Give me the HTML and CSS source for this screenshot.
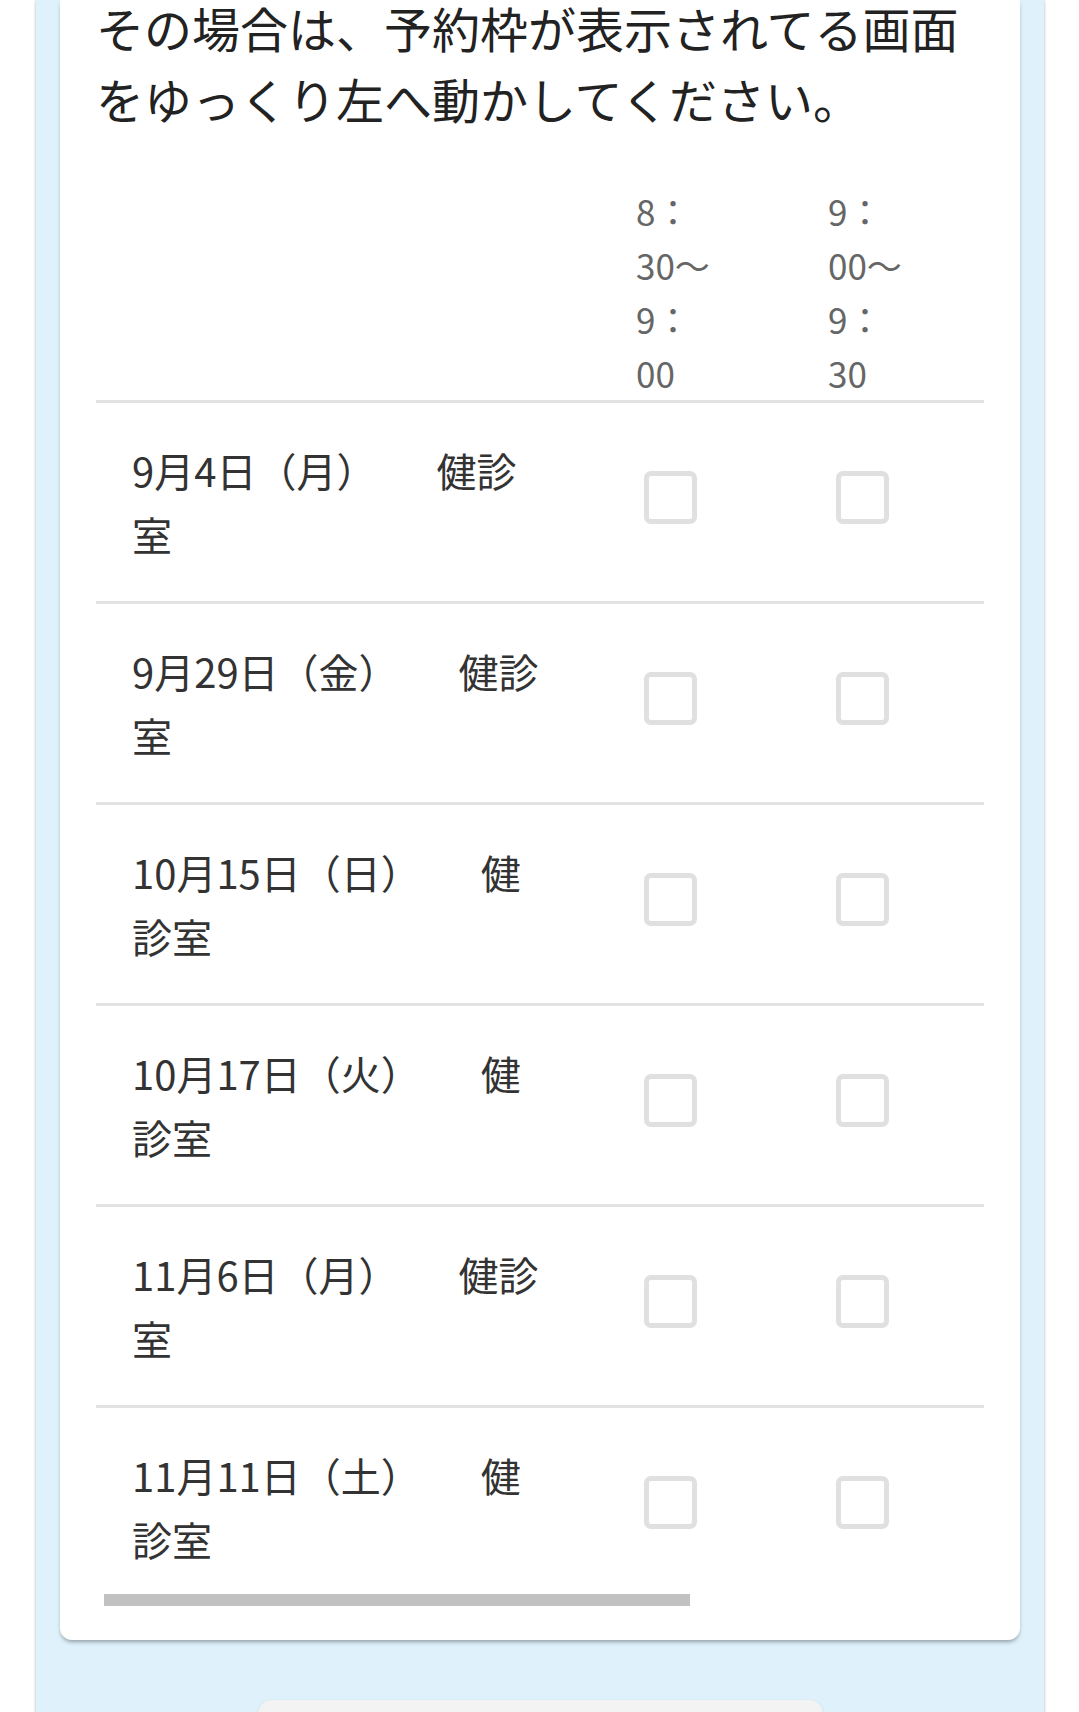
FILE: index.html
```html
<!DOCTYPE html>
<html lang="ja">

<head>
  <meta charset="UTF-8">
  <meta name="viewport" content="width=device-width, initial-scale=1.0">
  <title>予約枠の選択</title>
  <link rel="stylesheet" href="styles.css">
</head>

<body>
  <div class="panel">
    <div class="card">
      <p class="notice">その場合は、予約枠が表示されてる画面をゆっくり左へ動かしてください。</p>

      <div class="table-wrap">
        <table class="slots">
          <thead>
            <tr>
              <th class="col-date"></th>
              <th class="col-time">8：<wbr>30〜<wbr>9：<wbr>00</th>
              <th class="col-time">9：<wbr>00〜<wbr>9：<wbr>30</th>
              <th class="col-time">9：<wbr>30〜<wbr>10：<wbr>00</th>
              <th class="col-time col-last">10：<wbr>00〜<wbr>10：<wbr>30</th>
            </tr>
          </thead>
          <tbody>
            <tr>
              <td class="date">9月4日（月）　　健診室</td>
              <td class="check"><input type="checkbox"></td>
              <td class="check"><input type="checkbox"></td>
              <td class="check"><input type="checkbox"></td>
              <td class="check"><input type="checkbox"></td>
            </tr>
            <tr>
              <td class="date">9月29日（金）　　健診室</td>
              <td class="check"><input type="checkbox"></td>
              <td class="check"><input type="checkbox"></td>
              <td class="check"><input type="checkbox"></td>
              <td class="check"><input type="checkbox"></td>
            </tr>
            <tr>
              <td class="date">10月15日（日）　　健診室</td>
              <td class="check"><input type="checkbox"></td>
              <td class="check"><input type="checkbox"></td>
              <td class="check"><input type="checkbox"></td>
              <td class="check"><input type="checkbox"></td>
            </tr>
            <tr>
              <td class="date">10月17日（火）　　健診室</td>
              <td class="check"><input type="checkbox"></td>
              <td class="check"><input type="checkbox"></td>
              <td class="check"><input type="checkbox"></td>
              <td class="check"><input type="checkbox"></td>
            </tr>
            <tr>
              <td class="date">11月6日（月）　　健診室</td>
              <td class="check"><input type="checkbox"></td>
              <td class="check"><input type="checkbox"></td>
              <td class="check"><input type="checkbox"></td>
              <td class="check"><input type="checkbox"></td>
            </tr>
            <tr>
              <td class="date">11月11日（土）　　健診室</td>
              <td class="check"><input type="checkbox"></td>
              <td class="check"><input type="checkbox"></td>
              <td class="check"><input type="checkbox"></td>
              <td class="check"><input type="checkbox"></td>
            </tr>
          </tbody>
        </table>
      </div>
      <!-- scroll indicator (native scrollbar is hidden) -->
      <div class="scroll-track"><div class="scroll-thumb"></div></div>
    </div>

    <button class="btn-next">確認</button>
  </div>
</body>

</html>
```

FILE: styles.css
```css
* {
  box-sizing: border-box;
  margin: 0;
  padding: 0;
  font-family: "Noto Sans CJK JP", sans-serif;
}

body {
  background-color: #fff;
  overflow: hidden;
}

.panel {
  margin: 0 35px 0 36px;
  padding: 0 24px 40px;
  background-color: #dff2fc;
  box-shadow: 0 0 3px rgba(0, 0, 0, 0.3);
}

.card {
  display: flow-root;
  background-color: white;
  padding: 0 36px 34px;
  border-radius: 0 0 12px 12px;
  box-shadow: 0 3px 4px -1px rgba(0, 0, 0, 0.35);
}

.notice {
  margin: -8px 0 16px;
  font-size: 48px;
  line-height: 71px;
  color: #222;
}

.table-wrap {
  overflow-x: auto;
  scrollbar-width: none;
}

.table-wrap::-webkit-scrollbar {
  display: none;
}

.slots {
  width: 1321px;
  table-layout: fixed;
  border-collapse: collapse;
}

.slots th {
  padding: 34px 54px 0 58px;
  font-size: 35px;
  line-height: 54px;
  font-weight: normal;
  color: #666;
  text-align: left;
  vertical-align: bottom;
  border-bottom: 3px solid #e3e3e3;
}

.slots th.col-date {
  width: 482px;
}

.slots th.col-time {
  width: 192px;
}

.slots th.col-last {
  width: 263px;
}

.slots td {
  border-bottom: 3px solid #e3e3e3;
  vertical-align: top;
}

.slots tr:last-child td {
  border-bottom: none;
}

td.date {
  padding: 35px 36px 35px 36px;
  font-size: 40px;
  line-height: 64px;
  color: #333;
}

.slots tr:last-child td.date {
  padding-bottom: 23px;
}

td.check {
  padding: 68px 0 0 66px;
}

td.check input {
  display: block;
  appearance: none;
  width: 53px;
  height: 53px;
  border: 5px solid #e0e0e0;
  border-radius: 7px;
  background-color: white;
}

.scroll-track {
  padding: 0 8px;
  height: 12px;
}

.scroll-thumb {
  width: 586px;
  height: 12px;
  background-color: #c1c1c1;
}

.btn-next {
  display: block;
  width: 565px;
  height: 110px;
  margin: 60px auto 0;
  border: none;
  border-radius: 14px;
  background-color: #f3f3f3;
  box-shadow: 0 1px 3px rgba(0, 0, 0, 0.15);
  font-size: 40px;
  color: #333;
}
```
